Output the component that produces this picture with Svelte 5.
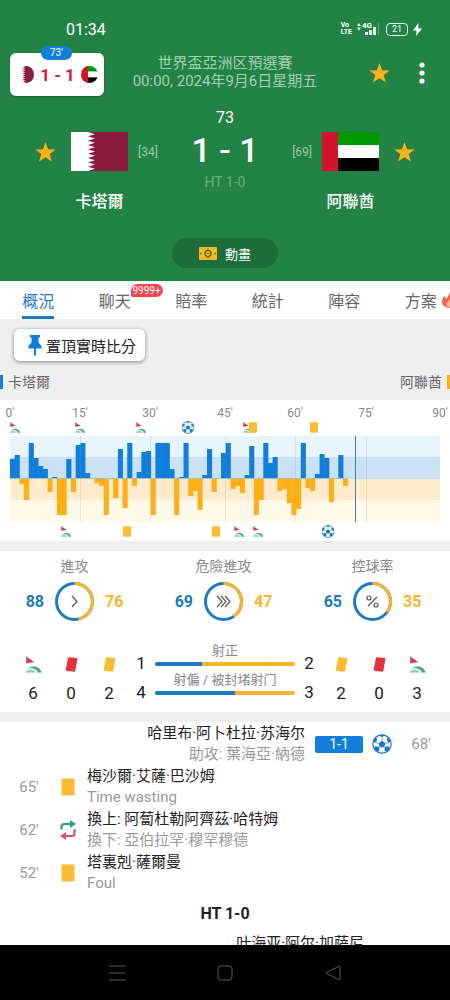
<script>
    const tabs = [
        { label: '概況', active: true },
        { label: '聊天', badge: '9999+' },
        { label: '賠率' },
        { label: '統計' },
        { label: '陣容' },
        { label: '方案', hot: true },
    ];

    // one value per minute, home above the middle line, away below it
    const momentum = [
        19, 23, -5, -21, 35, 20, 12, 9, -13, 1,
        -36, -36, 19, -13, 33, 35, 5, 0, -4, -7,
        -36, 0, -19, 29, -29, 35, -7, 6, 26, 27,
        -36, 35, 35, 35, 9, -36, 1, 35, -17, -12,
        -31, 3, 29, -13, 0, 25, 35, -10, -7, -14,
        3, 32, -36, -21, 35, 15, 21, -12, -10, -24,
        -36, -30, 35, -9, -12, 4, 24, 20, -23, 0,
        23, -7,
    ];
    const chartWidth = 430;
    const slot = 4.69;
    const now = 346;

    const axis = [
        { label: "0'", x: 0 },
        { label: "15'", x: 70 },
        { label: "30'", x: 140 },
        { label: "45'", x: 215 },
        { label: "60'", x: 285 },
        { label: "75'", x: 356 },
        { label: "90'", x: 430 },
    ];

    const homeMarks = [
        { type: 'corner', x: 5 },
        { type: 'corner', x: 70 },
        { type: 'corner', x: 131 },
        { type: 'goal', x: 178 },
        { type: 'corner', x: 238 },
        { type: 'yellow', x: 243 },
        { type: 'yellow', x: 304 },
    ];
    const awayMarks = [
        { type: 'corner', x: 56 },
        { type: 'yellow', x: 117 },
        { type: 'yellow', x: 206 },
        { type: 'corner', x: 229 },
        { type: 'corner', x: 248 },
        { type: 'goal', x: 318 },
    ];

    const rings = [
        { title: '進攻', home: 88, away: 76, icon: 'one' },
        { title: '危險進攻', home: 69, away: 47, icon: 'three' },
        { title: '控球率', home: 65, away: 35, icon: 'percent' },
    ];

    const homeCounts = [
        { type: 'corner', n: 6 },
        { type: 'redTilt', n: 0 },
        { type: 'yellowTilt', n: 2 },
    ];
    const awayCounts = [
        { type: 'yellowTilt', n: 2 },
        { type: 'redTilt', n: 0 },
        { type: 'corner', n: 3 },
    ];

    const shots = [
        { label: '射正', home: 1, away: 2 },
        { label: '射偏 / 被封堵射门', home: 4, away: 3 },
    ];

    const events = [
        { side: 'away', time: "68'", icon: 'goal', score: '1-1', name: '哈里布·阿卜杜拉·苏海尔', note: '助攻: 葉海亞·納德' },
        { side: 'home', time: "65'", icon: 'yellow', name: '梅沙爾·艾薩·巴沙姆', note: 'Time wasting' },
        { side: 'home', time: "62'", icon: 'sub', name: '換上: 阿蔔杜勒阿齊茲·哈特姆', note: '換下: 亞伯拉罕·穆罕穆德' },
        { side: 'home', time: "52'", icon: 'yellow', name: '塔裏剋·薩爾曼', note: 'Foul' },
    ];

    const pct = (x) => (x / chartWidth) * 100;
    const share = (a, b) => (a / (a + b)) * 100;
</script>

{#snippet star()}
    <svg class="star" viewBox="0 0 22 21" aria-hidden="true">
        <path fill="#fcaf17" d="M11 0l2.700 7.600 8.100.2-6.400 4.900 2.300 7.800L11 15.900l-6.700 4.600 2.300-7.800L.2 7.800l8.100-.2z" />
    </svg>
{/snippet}

{#snippet qatar()}
    <svg viewBox="0 0 57 39" preserveAspectRatio="xMinYMid slice" aria-hidden="true">
        <rect width="57" height="39" fill="#fff" />
        <path fill="#8a1c40" d="M57 0H17l7 2.200-7 2.100 7 2.200-7 2.200 7 2.100-7 2.200 7 2.200-7 2.100 7 2.200-7 2.200 7 2.100-7 2.200 7 2.200-7 2.100 7 2.200-7 2.200 7 2.100-7 2.200H57z" />
    </svg>
{/snippet}

{#snippet emirates()}
    <svg viewBox="0 0 57 39" preserveAspectRatio="xMinYMid slice" aria-hidden="true">
        <rect width="57" height="13" fill="#009a00" />
        <rect y="13" width="57" height="13" fill="#fff" />
        <rect y="26" width="57" height="13" fill="#000" />
        <rect width="16" height="39" fill="#d3142e" />
    </svg>
{/snippet}

{#snippet mark(type, size)}
    {#if type === 'corner'}
        <svg width={size} height={size} viewBox="0 0 17 17" aria-hidden="true">
            <path fill="#f6c9cb" d="M1 0h1v8H1z" />
            <path fill="#dc3f4c" d="M1.300 .5l8.200 5.800-8.200.9z" />
            <path fill="#d9efe3" d="M.5 16.500C1 12 4 10.500 8 10.500c5 0 8 3 8.500 6z" />
            <path fill="#4aa57a" d="M4 12c5-3.500 11-1 12.500 4.500H13C12 13 9 11.500 4 12z" />
            <path fill="#8fceb0" d="M.5 16.500c2-3 7-3.500 9.500 0z" />
        </svg>
    {:else if type === 'goal'}
        <svg width={size} height={size} viewBox="0 0 24 24" aria-hidden="true">
            <circle cx="12" cy="12" r="11" fill="#fff" stroke="#2577bd" stroke-width="1.500" />
            <g fill="#1a78cc">
                <path d="M12 8l4.200 3-1.600 4.900H9.400L7.800 11z" />
                <path d="M8.300 1.500L12 3.800l3.700-2.300C13.500.6 10.500.6 8.300 1.500z" />
                <path d="M1.200 9.200l3.600 1.300L6.200 6 4.300 4.100C2.700 5.500 1.500 7.300 1.200 9.200z" />
                <path d="M22.800 9.200l-3.600 1.300L17.800 6l1.900-1.900c1.600 1.400 2.800 3.200 3.100 5.100z" />
                <path d="M3.200 18.500l.5-3.700 4.700.5.6 4.500-2 1.700c-1.500-.6-2.900-1.700-3.800-3z" />
                <path d="M20.800 18.500l-.5-3.700-4.700.5-.6 4.500 2 1.700c1.500-.6 2.900-1.700 3.800-3z" />
            </g>
            <path stroke="#2577bd" stroke-width=".8" fill="none" d="M12 8V3.800M7.800 11l-3-.5M16.200 11l3-.5M9.400 15.900l-1 .4M14.600 15.900l1 .4" />
        </svg>
    {:else if type === 'sub'}
        <svg width={size} height={size} viewBox="0 0 18 20" aria-hidden="true">
            <path fill="none" stroke="#26a17b" stroke-width="2.200" d="M2.500 9.500V7q0-3 3-3H12" />
            <path fill="#26a17b" d="M11 0l6 4-6 4z" />
            <path fill="none" stroke="#e0506a" stroke-width="2.200" d="M15.500 9v4.500q0 2.500-3 2.500H6" />
            <path fill="#e0506a" d="M7 12l-6 4 6 4z" />
        </svg>
    {:else if type === 'yellow'}
        <svg width={size} height={size} viewBox="0 0 18 18" aria-hidden="true">
            <rect x="2.500" y=".5" width="13" height="17" rx="1.500" fill="#fcbb30" />
        </svg>
    {:else}
        <svg width={size} height={size} viewBox="0 0 18 18" aria-hidden="true">
            <path fill={type === 'redTilt' ? '#e53238' : '#f9bd34'} d="M6.500 1.200l8 .9q1 .2.800 1.200L13 15.700q-.3 1.200-1.500 1L3.700 15.600q-1-.2-.8-1.200L5.300 2.200q.2-1 1.200-1z" />
        </svg>
    {/if}
{/snippet}

{#snippet timeline(marks)}
    <div class="marks">
        {#each marks as m}
            <span class="mark" style="left: {pct(m.x)}%">
                {@render mark(m.type, m.type === 'goal' ? 13 : 11)}
            </span>
        {/each}
    </div>
{/snippet}

{#snippet counts(items)}
    <div class="counts">
        {#each items as c}
            <div class="count">
                {@render mark(c.type, 17)}
                <span>{c.n}</span>
            </div>
        {/each}
    </div>
{/snippet}

<div class="app">
    <header>
        <div class="status">
            <span class="clock">01:34</span>
            <div class="signals">
                <span class="volte">Vo<br />LTE</span>
                <div class="cell">
                    <span>4G</span>
                    <svg width="24" height="14" viewBox="0 0 24 14" aria-hidden="true">
                        <path fill="#e6f5ea" d="M0 4l2-3 2 3zM0 5.500h4l-2 3zM8 10h3v3H8zM12 8h3v5h-3zM16 5h3v8h-3z" />
                        <path fill="#5ba576" d="M21 1h1v12h-1z" />
                    </svg>
                </div>
                <span class="battery">21</span>
                <svg width="9" height="13" viewBox="0 0 9 13" aria-hidden="true">
                    <path fill="#fff" d="M5.500 0L0 7.500h3.500L3 13l6-7.500H5.300z" />
                </svg>
            </div>
        </div>

        <div class="toolbar">
            <div class="mini">
                <span class="minute">73'</span>
                <span class="round home">{@render qatar()}</span>
                <b>1 - 1</b>
                <span class="round">{@render emirates()}</span>
            </div>
            <div class="league">世界盃亞洲区預選賽<br />00:00, 2024年9月6日星期五</div>
            <div class="actions">
                <button aria-label="收藏">{@render star()}</button>
                <button aria-label="更多">
                    <svg width="6" height="22" viewBox="0 0 6 22" aria-hidden="true">
                        <circle cx="3" cy="3" r="2.600" fill="#fff" />
                        <circle cx="3" cy="11" r="2.600" fill="#fff" />
                        <circle cx="3" cy="19" r="2.600" fill="#fff" />
                    </svg>
                </button>
            </div>
        </div>

        <div class="match">
            <div class="team">
                <button aria-label="收藏 卡塔爾">{@render star()}</button>
                <div class="flag">{@render qatar()}</div>
                <span class="rank">[34]</span>
                <h2>卡塔爾</h2>
            </div>
            <div class="score">
                <span class="time">73</span>
                <strong>1 - 1</strong>
                <span class="half">HT 1-0</span>
            </div>
            <div class="team away">
                <span class="rank">[69]</span>
                <div class="flag">{@render emirates()}</div>
                <button aria-label="收藏 阿聯酋">{@render star()}</button>
                <h2>阿聯酋</h2>
            </div>
        </div>

        <button class="animation">
            <svg width="18" height="13" viewBox="0 0 18 13" aria-hidden="true">
                <rect width="18" height="13" rx="1" fill="#f8b62b" />
                <circle cx="9" cy="6.500" r="3" fill="none" stroke="#5d6b1f" stroke-width="1.300" />
                <path fill="#5d6b1f" d="M8.500 1.500h1v2h-1zM8.500 9.500h1v2h-1zM1.500 5l1.500 1.500L1.500 8zM16.500 5L15 6.500 16.500 8zM7.500 6h3v1h-3z" />
            </svg>
            動畫
        </button>
    </header>

    <nav class="tabs">
        {#each tabs as tab}
            <button class="tab" class:active={tab.active}>
                <span>{tab.label}</span>
                {#if tab.badge}<em>{tab.badge}</em>{/if}
                {#if tab.hot}
                    <svg class="fire" width="15" height="17" viewBox="0 0 15 17" aria-hidden="true">
                        <path fill="#f4664a" d="M8 0c1 4 6 5 6 10.500 0 4-3 6.500-6.500 6.500S0 14.500 0 11c0-3 1.500-4 2-6 1 .7 1.700 1.500 2 2.700C6 6 7.500 3.500 8 0z" />
                        <path fill="#fdb18c" d="M7.500 8c.5 2 3 3 3 5.500 0 2-1.500 3-3 3s-3.500-1-3.500-3C4 11.500 7 11 7.500 8z" />
                    </svg>
                {/if}
            </button>
        {/each}
    </nav>

    <main>
        <section class="top">
            <button class="pin">
                <svg width="14" height="21" viewBox="0 0 14 21" aria-hidden="true">
                    <path fill="#147fd8" d="M2 0h10v2.500h-1.500v5L13.500 11v2.500H8V20l-1 1-1-1v-6.500H.5V11l3-3.500v-5H2z" />
                </svg>
                置頂實時比分
            </button>
            <div class="sides">
                <span class="home">卡塔爾</span>
                <span class="away">阿聯酋</span>
            </div>
        </section>

        <section class="chart">
            <div class="axis">
                {#each axis as a}
                    <span style="left: {pct(a.x)}%">{a.label}</span>
                {/each}
            </div>
            {@render timeline(homeMarks)}
            <svg class="plot" viewBox="0 0 430 86" preserveAspectRatio="none" role="img" aria-label="進攻走勢">
                <rect width="430" height="22" fill="#e9f5fc" />
                <rect y="21" width="430" height="22" fill="#cae1f6" />
                <rect y="43" width="430" height="22" fill="#fdebcb" />
                <rect y="64" width="430" height="22" fill="#fff9ea" />
                {#each axis.slice(1, 6) as a}
                    <rect x={a.x} width="1" height="86" fill="#8a7fa8" opacity=".18" />
                {/each}
                {#each momentum as v, i}
                    <rect
                        x={i * slot}
                        y={v > 0 ? 42 - v : 43}
                        width={slot + 0.4}
                        height={Math.abs(v)}
                        fill={v > 0 ? '#127edb' : '#fdaf17'}
                    />
                {/each}
                <rect y="42" width={momentum.length * slot} height="1" fill="#8f9f8c" opacity=".5" />
                <rect x={now - 1} width="1" height="86" fill="#3f7fae" />
            </svg>
            {@render timeline(awayMarks)}
        </section>

        <section class="stats">
            <div class="rings">
                {#each rings as r}
                    <div class="ring">
                        <h3>{r.title}</h3>
                        <div class="values">
                            <b class="blue">{r.home}</b>
                            <svg width="39" height="39" viewBox="0 0 39 39" aria-hidden="true">
                                <circle cx="19.500" cy="19.500" r="18" fill="none" stroke="#1f7ac6" stroke-width="3" />
                                <circle cx="19.500" cy="19.500" r="18" fill="none" stroke="#f8b42b" stroke-width="3" pathLength="100" stroke-dasharray="{share(r.away, r.home)} 100" transform="rotate(-90 19.500 19.500)" />
                                <g fill="none" stroke="#555" stroke-width="1.200">
                                    {#if r.icon === 'one'}
                                        <path d="M17 14l5 5.500-5 5.500" />
                                    {:else if r.icon === 'three'}
                                        <path d="M13 14l5 5.500-5 5.500M17 14l5 5.500-5 5.500M21 14l5 5.500-5 5.500" />
                                    {:else}
                                        <circle cx="16" cy="16" r="2" />
                                        <circle cx="23" cy="23" r="2" />
                                        <path d="M24 15l-9 9" />
                                    {/if}
                                </g>
                            </svg>
                            <b class="amber">{r.away}</b>
                        </div>
                    </div>
                {/each}
            </div>
            <div class="details">
                {@render counts(homeCounts)}
                <div class="shots">
                    {#each shots as s}
                        <div class="shot">
                            <span class="num">{s.home}</span>
                            <div class="meter">
                                <span>{s.label}</span>
                                <div class="bar"><div class="fill" style="width: {share(s.home, s.away)}%"></div></div>
                            </div>
                            <span class="num">{s.away}</span>
                        </div>
                    {/each}
                </div>
                {@render counts(awayCounts)}
            </div>
        </section>

        <section class="events">
            {#each events as e}
                <div class="event {e.side}">
                    <span class="when">{e.time}</span>
                    <span class="icon">{@render mark(e.icon, e.icon === 'yellow' ? 18 : 20)}</span>
                    {#if e.score}<span class="result">{e.score}</span>{/if}
                    <div class="who">
                        {e.name}
                        <small>{e.note}</small>
                    </div>
                </div>
            {/each}
            <h4>HT 1-0</h4>
            <div class="event away next">
                <div class="who">叶海亚·阿尔·加萨尼</div>
            </div>
        </section>
    </main>

    <footer>
        <button aria-label="選單">
            <svg width="16" height="16" viewBox="0 0 16 16" aria-hidden="true"><path d="M0 1h16M0 8h16M0 15h16" /></svg>
        </button>
        <button aria-label="主畫面">
            <svg width="16" height="16" viewBox="0 0 16 16" aria-hidden="true"><rect x="1" y="1" width="14" height="14" rx="3" /></svg>
        </button>
        <button aria-label="返回">
            <svg width="16" height="16" viewBox="0 0 16 16" aria-hidden="true"><path d="M15 2v12q0 1-1 .6L1.500 8.600q-1-.6 0-1.200L14 1.400q1-.4 1 .6z" /></svg>
        </button>
    </footer>
</div>

<style>
    :global(body) {
        margin: 0;
        background: #efefef;
    }
    .app {
        height: 100vh;
        display: flex;
        flex-direction: column;
        font-family: Roboto, "Noto Sans CJK TC", sans-serif;
        color: #222;
    }
    button {
        font: inherit;
        color: inherit;
        background: none;
        border: 0;
        padding: 0;
        cursor: pointer;
    }
    svg {
        display: block;
        flex: none;
    }
    h2, h3, h4 {
        margin: 0;
    }

    header {
        flex: none;
        background: #238347;
        color: #fff;
        padding: 18px 0 13px;
    }
    .status {
        display: flex;
        justify-content: space-between;
        align-items: center;
        height: 22px;
        padding: 0 28px 0 66px;
    }
    .clock {
        font-size: 16px;
    }
    .signals {
        display: flex;
        align-items: center;
        gap: 5px;
    }
    .volte {
        font-size: 7px;
        line-height: 7px;
        font-weight: 700;
    }
    .cell {
        position: relative;
    }
    .cell span {
        position: absolute;
        left: 5px;
        top: 0;
        font-size: 8px;
        line-height: 8px;
        font-weight: 700;
    }
    .battery {
        width: 20px;
        border: 1px solid #e6f5ea;
        border-radius: 4px;
        font-size: 9px;
        line-height: 11px;
        text-align: center;
    }
    .toolbar {
        display: grid;
        grid-template-columns: 1fr auto 1fr;
        padding: 13px 10px 0;
    }
    .mini {
        position: relative;
        justify-self: start;
        display: flex;
        align-items: center;
        gap: 4px;
        height: 43px;
        padding: 0 6px 0 9px;
        border-radius: 6px;
        background: #fff;
        box-shadow: 0 1px 2px rgba(0, 0, 0, .3);
    }
    .mini b {
        width: 39px;
        text-align: center;
        font-size: 17px;
        color: #cc2138;
    }
    .minute {
        position: absolute;
        left: 31px;
        top: -7px;
        width: 31px;
        border-radius: 7px;
        background: #147fd8;
        font-size: 10px;
        line-height: 14px;
        text-align: center;
    }
    .round {
        width: 17px;
        height: 17px;
        border-radius: 50%;
        overflow: hidden;
    }
    .round svg {
        width: 17px;
        height: 17px;
    }
    .round.home {
        width: 15px;
    }
    .round.home svg {
        margin-left: -4px;
        width: 19px;
    }
    .league {
        padding-top: 1px;
        font-size: 15px;
        line-height: 18px;
        text-align: center;
        color: #a3cfb1;
    }
    .actions {
        display: flex;
        justify-content: flex-end;
        align-items: center;
        gap: 29px;
        height: 39px;
        padding-right: 15px;
    }
    .star {
        width: 21px;
        height: 20px;
    }
    .match {
        display: flex;
        padding: 13px 35px 0;
    }
    .team {
        display: grid;
        grid-template-columns: 26px 57px 20px;
        column-gap: 10px;
        row-gap: 19px;
        align-items: center;
        justify-items: start;
        padding-top: 23px;
    }
    .team.away {
        grid-template-columns: 20px 57px 26px;
        justify-items: end;
    }
    .flag svg {
        width: 57px;
        height: 39px;
    }
    .rank {
        font-size: 12px;
        color: #9accaa;
    }
    .team h2 {
        grid-column: 2;
        justify-self: center;
        font-size: 16px;
        line-height: 24px;
        font-weight: 500;
        white-space: nowrap;
    }
    .score {
        flex: 1;
        display: flex;
        flex-direction: column;
        align-items: center;
    }
    .time {
        font-size: 16px;
        line-height: 18px;
    }
    strong {
        font-size: 34px;
        line-height: 46px;
        font-weight: 500;
    }
    .half {
        font-size: 14px;
        line-height: 18px;
        color: #6aae80;
    }
    .animation {
        display: flex;
        align-items: center;
        justify-content: center;
        gap: 8px;
        width: 106px;
        height: 30px;
        margin: 24px auto 0;
        border-radius: 15px;
        background: #1d6d3a;
        font-size: 13px;
    }

    .tabs {
        flex: none;
        display: flex;
        height: 38px;
        overflow: hidden;
        background: #fff;
    }
    .tab {
        position: relative;
        flex: 0 0 17%;
        font-size: 16px;
        color: #666;
    }
    .tab span {
        display: inline-block;
        padding-top: 6px;
        line-height: 29px;
        border-bottom: 3px solid transparent;
    }
    .tab.active {
        color: #1c79c4;
    }
    .tab.active span {
        border-color: #1c79c4;
    }
    .tab em {
        position: absolute;
        left: 54px;
        top: 3px;
        width: 32px;
        border-radius: 7px 7px 7px 2px;
        background: #ef4650;
        color: #fff;
        font-size: 10px;
        line-height: 13px;
        font-style: normal;
        z-index: 1;
    }
    .fire {
        position: absolute;
        left: 59px;
        top: 10px;
    }

    main {
        flex: 1;
        min-height: 0;
        overflow: hidden;
    }
    .top {
        padding: 10px 0 9px;
    }
    .pin {
        display: flex;
        align-items: center;
        gap: 4px;
        height: 32px;
        margin-left: 14px;
        padding: 0 9px 0 14px;
        border-radius: 6px;
        background: #fff;
        box-shadow: 0 1px 4px rgba(0, 0, 0, .45);
        font-size: 15px;
    }
    .sides {
        display: flex;
        justify-content: space-between;
        margin-top: 12px;
        font-size: 14px;
        color: #666;
    }
    .sides span {
        display: flex;
        align-items: center;
        gap: 5px;
        line-height: 18px;
    }
    .sides .home::before,
    .sides .away::after {
        content: "";
        width: 3px;
        height: 14px;
        background: #147fd8;
    }
    .sides .away::after {
        background: #fdaf17;
    }

    .chart,
    .stats,
    .events {
        background: #fff;
    }
    .chart {
        padding: 6px 10px 3px;
        margin-bottom: 10px;
    }
    .axis {
        position: relative;
        height: 14px;
        font-size: 12px;
        line-height: 14px;
        color: #888;
    }
    .axis span,
    .mark {
        position: absolute;
        transform: translateX(-50%);
    }
    .marks {
        position: relative;
        height: 16px;
    }
    .mark {
        top: 0;
        height: 14px;
        display: flex;
        align-items: center;
    }
    .plot {
        width: 100%;
        height: 86px;
    }
    .plot + .marks .mark {
        top: 2px;
    }

    .stats {
        padding: 5px 0 9px;
        margin-bottom: 10px;
    }
    .rings {
        display: grid;
        grid-template-columns: repeat(3, 1fr);
        padding-right: 3px;
    }
    .ring h3 {
        text-align: center;
        font-size: 14px;
        line-height: 20px;
        font-weight: 400;
        color: #888;
    }
    .values {
        display: flex;
        align-items: center;
        justify-content: center;
        gap: 11px;
        margin-top: 6px;
        font-size: 16px;
    }
    .blue {
        color: #1c79c4;
    }
    .amber {
        color: #f8b42b;
    }
    .details {
        display: flex;
        padding: 19px 14px 0;
    }
    .counts {
        display: flex;
        padding-top: 16px;
    }
    .count {
        width: 38px;
        display: flex;
        flex-direction: column;
        align-items: center;
        gap: 10px;
        font-size: 17px;
        line-height: 20px;
    }
    .shots {
        flex: 1;
        padding: 0 4px;
    }
    .shot {
        display: flex;
        align-items: flex-end;
        height: 29px;
        gap: 5px;
    }
    .shot .num {
        width: 18px;
        font-size: 17px;
        line-height: 12px;
        text-align: center;
    }
    .meter {
        flex: 1;
        padding-bottom: 3px;
        text-align: center;
        font-size: 13px;
        line-height: 22px;
        color: #888;
    }
    .meter span {
        display: block;
        white-space: nowrap;
    }
    .bar {
        height: 4px;
        border-radius: 2px;
        background: #f8b42b;
        overflow: hidden;
    }
    .fill {
        height: 100%;
        background: #1c79c4;
    }

    .events {
        display: flex;
        flex-direction: column;
        gap: 1px;
        padding-top: 1px;
        min-height: 100%;
    }
    .event {
        display: flex;
        align-items: center;
        padding: 0 18px;
    }
    .event.away {
        flex-direction: row-reverse;
    }
    .when {
        width: 22px;
        font-size: 15px;
        color: #999;
        text-align: center;
    }
    .icon {
        width: 20px;
        display: flex;
        justify-content: center;
        margin: 0 9px 0 18px;
    }
    .away .icon {
        margin: 0 18px 0 9px;
    }
    .result {
        width: 48px;
        border-radius: 2px;
        background: #147fd8;
        color: #fff;
        font-size: 14px;
        line-height: 17px;
        text-align: center;
        margin-left: 10px;
    }
    .who {
        font-size: 15px;
        line-height: 21px;
    }
    .away .who {
        text-align: right;
    }
    .who small {
        display: block;
        font-size: 15px;
        color: #999;
    }
    h4 {
        margin: 9px 0 8px;
        text-align: center;
        font-size: 16px;
        line-height: 20px;
    }
    .next {
        padding-right: 86px;
    }

    footer {
        flex: none;
        display: flex;
        justify-content: center;
        height: 55px;
        background: #000;
    }
    footer button {
        flex: 0 0 24%;
        display: flex;
        align-items: center;
        justify-content: center;
    }
    footer svg {
        fill: none;
        stroke: #5c5c5c;
    }
</style>
